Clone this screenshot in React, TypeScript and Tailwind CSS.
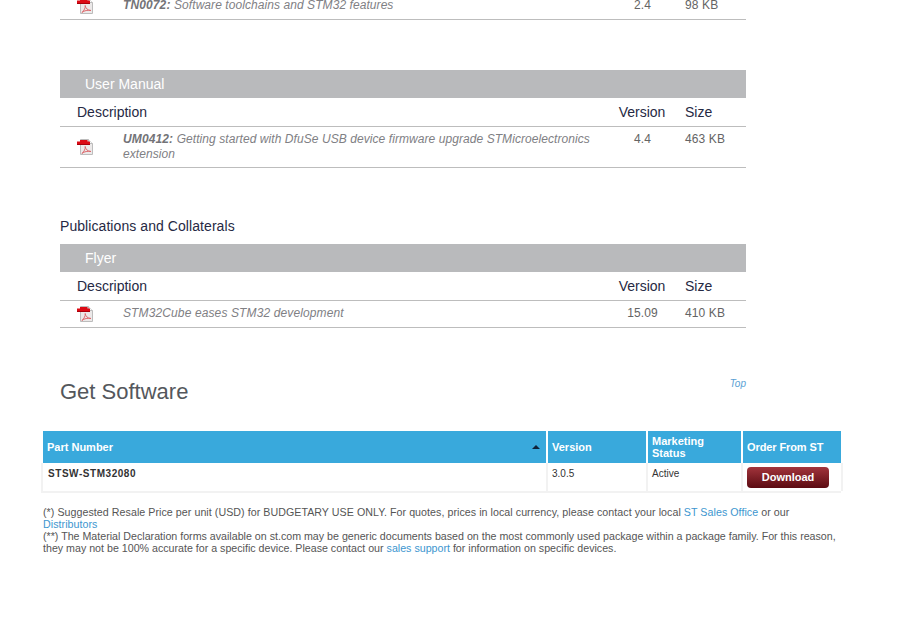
const font = "font-['Liberation_Sans',Arial,sans-serif]";

function PdfIcon() {
  return (
    <svg width="16" height="16" viewBox="0 0 16 16" className="shrink-0 self-center">
      <path d="M3.5 0.5H11.5L15.5 4.5V15.5H3.5Z" fill="#ece9e9" stroke="#bcbcbc" strokeWidth="1" />
      <path d="M11.5 0.5V4.5H15.5" fill="#fafafa" stroke="#bcbcbc" strokeWidth="1" />
      <path d="M3 1H10.5V2.5H13V6H0V2.5H3Z" fill="#dc0a14" />
      <path d="M0 5H13V6H0Z" fill="#a8000a" />
      <path
        d="M5 14.5C7 12.5 8.6 10 8.2 7.5C8.4 10 10.5 12.4 14 12.5C11 12 7 12.4 5 14.5Z"
        fill="none"
        stroke="#dd6a6e"
        strokeWidth="1"
      />
    </svg>
  );
}

function DocHead({ title }: { title: string }) {
  return (
    <>
      <div className="h-[28px] bg-[#b9babc] pl-[25px] text-[14px] leading-[28px] text-white">{title}</div>
      <div className="flex h-[29px] items-center border-b border-[#bdbdbd] pl-[17px] text-[14px] text-[#262944]">
        <div className="flex-1">Description</div>
        <div className="w-[66px] text-center">Version</div>
        <div className="ml-[10px] w-[61px]">Size</div>
      </div>
    </>
  );
}

function DocRow({
  code,
  text,
  version,
  size,
  className,
}: {
  code?: string;
  text: string;
  version: string;
  size: string;
  className: string;
}) {
  return (
    <div className={`flex items-start border-b border-[#bdbdbd] pl-[17px] text-[12px] leading-[15px] ${className}`}>
      <PdfIcon />
      <div className={`ml-[30px] mt-[5px] w-[480px] italic text-[#808084] ${code ? "tracking-[0.07px]" : "tracking-[0.12px]"}`}>
        {code && <b className="tracking-[0.12px] text-[#737377]">{code}: </b>}
        {text}
      </div>
      <div className="ml-[6px] mt-[5px] w-[66px] pl-[1px] text-center tracking-[0.12px] text-[#646464]">{version}</div>
      <div className="ml-[10px] mt-[5px] w-[61px] tracking-[0.12px] text-[#646464]">{size}</div>
    </div>
  );
}

function SoftwareTable() {
  const head = "flex items-center bg-[#39a9dc] px-[4px] text-[11px] font-bold leading-[12px] text-white";
  const cell = "h-[28px] border-r-2 border-[#f2f2f2] px-[4px] pt-[5px] text-[10px] leading-[12px] text-[#333]";
  return (
    <div className="ml-[43px] mt-[26px] w-[798px]">
      <div className="grid h-[32px] grid-cols-[503px_98px_93px_98px] gap-x-[2px]">
        <div className={`${head} justify-between pr-[6px]`}>
          <span>Part Number</span>
          <span className="mb-[1px] h-0 w-0 border-x-[4px] border-b-[4px] border-x-transparent border-b-[#10233a]" />
        </div>
        <div className={head}>Version</div>
        <div className={head}>
          Marketing
          <br />
          Status
        </div>
        <div className={`${head} tracking-[-0.1px]`}>Order From ST</div>
      </div>
      <div className="-ml-[2px] grid w-[800px] grid-cols-[505px_100px_95px_100px] border-b-2 border-l-2 border-[#f2f2f2]">
        <div className={`${cell} pl-[5px] font-bold tracking-[0.55px] text-[#222]`}>STSW-STM32080</div>
        <div className={cell}>3.0.5</div>
        <div className={cell}>Active</div>
        <div className="h-[28px] border-r-2 border-[#f2f2f2] pl-[4px] pt-[4px]">
          <button className="block h-[21px] w-[82px] rounded-[4px] bg-gradient-to-b from-[#a2343c] to-[#5c0a12] text-[11px] font-bold leading-[21px] text-white">
            Download
          </button>
        </div>
      </div>
    </div>
  );
}

export default function App() {
  const link = "text-[#3d96cf]";
  return (
    <div className={`h-[617px] overflow-hidden bg-white ${font}`}>
      <div className="ml-[60px] w-[686px]">
        <DocRow
          code="TN0072"
          text="Software toolchains and STM32 features"
          version="2.4"
          size="98 KB"
          className="-mt-[7px] h-[27px]"
        />

        <div className="mt-[50px]">
          <DocHead title="User Manual" />
          <DocRow
            code="UM0412"
            text="Getting started with DfuSe USB device firmware upgrade STMicroelectronics extension"
            version="4.4"
            size="463 KB"
            className="h-[41px]"
          />
        </div>

        <div className="mt-[50px] h-[17px] text-[14px] leading-[17px] tracking-[0.07px] text-[#262944]">
          Publications and Collaterals
        </div>

        <div className="mt-[9px]">
          <DocHead title="Flyer" />
          <DocRow
            text="STM32Cube eases STM32 development"
            version="15.09"
            size="410 KB"
            className="h-[27px]"
          />
        </div>

        <div className="mt-[50px] flex h-[27px] items-start justify-between">
          <h2 className="text-[22px] leading-[27px] text-[#54575c]">Get Software</h2>
          <a className="text-[10px] italic leading-[12px] text-[#5a9fd4]">Top</a>
        </div>
      </div>

      <SoftwareTable />

      <div className="ml-[43px] mt-[13px] w-[798px] text-[10.67px] leading-[12px] text-[#555]">
        <p className="tracking-[0.05px]">
          (*) Suggested Resale Price per unit (USD) for BUDGETARY USE ONLY. For quotes, prices in local currency, please
          contact your local <a className={link}>ST Sales Office</a> or our
          <br />
          <a className={link}>Distributors</a>
        </p>
        <p>
          (**) The Material Declaration forms available on st.com may be generic documents based on the most commonly
          used package within a package family. For this reason, they may not be 100% accurate for a specific device.
          Please contact our <a className={link}>sales support</a> for information on specific devices.
        </p>
      </div>
    </div>
  );
}
